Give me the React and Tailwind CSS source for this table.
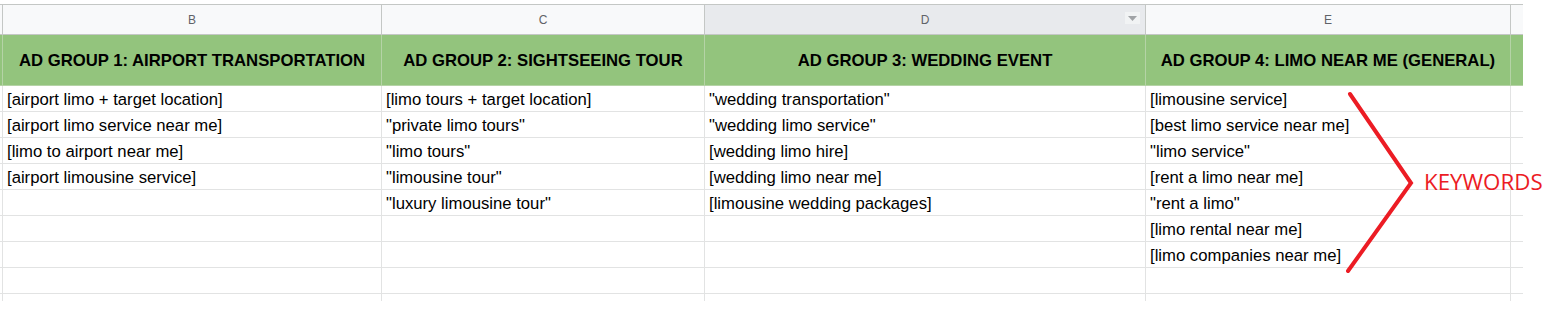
import React from "react";

const columns = [
  { letter: "B", width: "w-[379px]", title: "AD GROUP 1: AIRPORT TRANSPORTATION" },
  { letter: "C", width: "w-[323px]", title: "AD GROUP 2: SIGHTSEEING TOUR" },
  { letter: "D", width: "w-[441px]", title: "AD GROUP 3: WEDDING EVENT", selected: true },
  { letter: "E", width: "w-[365px]", title: "AD GROUP 4: LIMO NEAR ME (GENERAL)" },
];

const keywords = [
  ["[airport limo + target location]", "[limo tours + target location]", '"wedding transportation"', "[limousine service]"],
  ["[airport limo service near me]", '"private limo tours"', '"wedding limo service"', "[best limo service near me]"],
  ["[limo to airport near me]", '"limo tours"', "[wedding limo hire]", '"limo service"'],
  ["[airport limousine service]", '"limousine tour"', "[wedding limo near me]", "[rent a limo near me]"],
  ["", '"luxury limousine tour"', "[limousine wedding packages]", '"rent a limo"'],
  ["", "", "", "[limo rental near me]"],
  ["", "", "", "[limo companies near me]"],
  ["", "", "", ""],
];

function ColumnHeader() {
  return (
    <div className="flex h-[31px] border-y border-[#c4c7c5] bg-[#f8f9fa]">
      <div className="w-[3px] shrink-0 border-r border-[#c4c7c5]" />
      {columns.map((col) => (
        <div
          key={col.letter}
          className={`${col.width} shrink-0 relative flex items-center justify-center border-r border-[#c4c7c5] text-[12px] text-[#5f6368] ${
            col.selected ? "bg-[#e8eaed]" : ""
          }`}
        >
          {col.letter}
          {col.selected && (
            <div className="absolute right-[5px] top-[7px] w-[15px] h-[12px] bg-[#f1f3f4] flex items-center justify-center">
              <svg width="9" height="5" viewBox="0 0 9 5">
                <path d="M0 0 L9 0 L4.5 5 Z" fill="#a0a3a6" />
              </svg>
            </div>
          )}
        </div>
      ))}
      <div className="w-[12px] shrink-0" />
    </div>
  );
}

function GroupRow() {
  return (
    <div className="flex h-[51px] border-b border-[#b5d3a6] bg-[#93c47d]">
      <div className="w-[3px] shrink-0 border-r border-[#b5d3a6]" />
      {columns.map((col) => (
        <div
          key={col.letter}
          className={`${col.width} shrink-0 flex items-center justify-center pt-[1px] border-r border-[#b5d3a6] text-[16.7px] font-bold text-black whitespace-nowrap`}
        >
          {col.title}
        </div>
      ))}
      <div className="w-[12px] shrink-0" />
    </div>
  );
}

function DataRow({ cells }) {
  return (
    <div className="flex h-[26px] border-b border-[#e2e3e3]">
      <div className="w-[3px] shrink-0 border-r border-[#e2e3e3]" />
      {columns.map((col, i) => (
        <div
          key={col.letter}
          className={`${col.width} shrink-0 flex items-center pl-[4px] pt-[3px] border-r border-[#e2e3e3] text-[16.7px] text-black whitespace-nowrap`}
        >
          {cells[i]}
        </div>
      ))}
      <div className="w-[12px] shrink-0" />
    </div>
  );
}

export default function App() {
  return (
    <div className="relative w-[1556px] h-[325px] bg-white overflow-hidden font-['Liberation_Sans',Arial,sans-serif]">
      <div className="pt-[4px] w-[1523px]">
        <ColumnHeader />
        <GroupRow />
        {keywords.map((row, i) => (
          <DataRow key={i} cells={row} />
        ))}
        <div className="flex h-[7px]">
          <div className="w-[3px] shrink-0 border-r border-[#e2e3e3]" />
          {columns.map((col) => (
            <div key={col.letter} className={`${col.width} shrink-0 border-r border-[#e2e3e3]`} />
          ))}
        </div>
      </div>

      {/* annotation */}
      <svg className="absolute left-0 top-0 pointer-events-none" width="1556" height="325">
        <polyline
          points="1350,94 1411,183 1348,271"
          fill="none"
          stroke="#ec1c24"
          strokeWidth="4"
          strokeLinecap="round"
          strokeLinejoin="miter"
        />
      </svg>
      <div className="absolute left-[1424px] top-[167px] text-[22.3px] leading-[30px] text-[#ec1c24] font-['Open_Sans',sans-serif]">
        KEYWORDS
      </div>
    </div>
  );
}
